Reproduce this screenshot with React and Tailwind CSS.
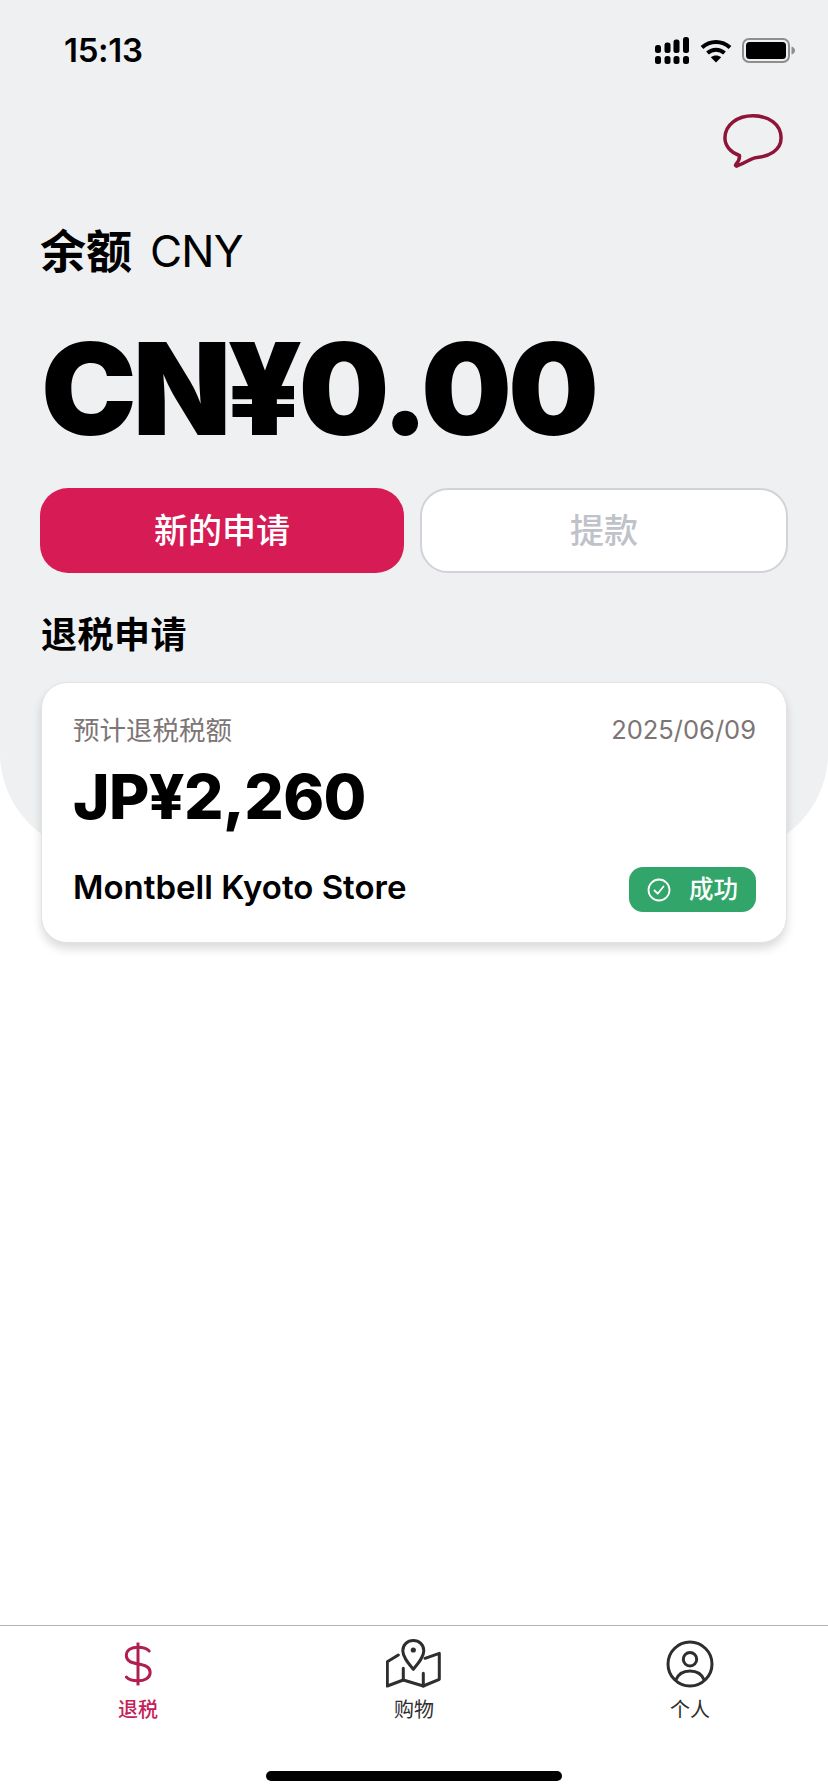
const CJK = '"Inter","Noto Sans CJK SC",sans-serif';

function StatusIcons() {
  return (
    <div className="flex items-center">
      <svg width="34" height="27" viewBox="0 0 34 27" fill="#000">
        <rect x="0" y="8" width="6" height="8" rx="2.5" />
        <rect x="9.500" y="5.500" width="6" height="10.500" rx="2.500" />
        <rect x="18.500" y="2.500" width="6" height="13.500" rx="2.500" />
        <rect x="28" y="0" width="6" height="16" rx="2.500" />
        <rect x="0" y="19" width="6" height="8" rx="2.500" />
        <rect x="9.500" y="19" width="6" height="8" rx="2.500" />
        <rect x="18.500" y="19" width="6" height="8" rx="2.500" />
        <rect x="28" y="19" width="6" height="8" rx="2.500" />
      </svg>
      <svg width="32" height="25" viewBox="0 0 32 25" fill="none" stroke="#000" strokeWidth="4" className="ml-[11px]">
        <path d="M2 9.500C10 2 22 2 30 9.500" />
        <path d="M7.500 15C12.500 10.500 19.500 10.500 24.500 15" />
        <path d="M16 24.500L10.800 19.200C13.800 16.800 18.200 16.800 21.200 19.200Z" fill="#000" stroke="none" />
      </svg>
      <svg width="53" height="25" viewBox="0 0 53 25" className="ml-[10px]">
        <rect x="1" y="1" width="46" height="23" rx="6" fill="none" stroke="#8e8e90" strokeWidth="2" />
        <rect x="4" y="4" width="40" height="17" rx="3.500" fill="#000" />
        <path d="M49.500 8.500C51.500 9 53 10.500 53 12.500C53 14.500 51.500 16 49.500 16.500Z" fill="#8e8e90" />
      </svg>
    </div>
  );
}

function ChatIcon() {
  return (
    <svg width="60" height="56" viewBox="0 0 62 56" fill="none" stroke="#8f1437" strokeWidth="3.600" strokeLinejoin="round">
      <path d="M31 2C47 2 60 10.500 60 25C60 38 47 44 35 45C30 45 25 50 14 54C13 54 12.500 53 13.500 52C16 49 17.500 46.500 17 43C8 40 2 33 2 25C2 11 15 2 31 2Z" />
    </svg>
  );
}

function NavItem({ label, color, children }) {
  return (
    <div className="flex w-[276px] flex-col items-center">
      <div className="flex h-[50px] items-center justify-center">{children}</div>
      <span className={`mt-[7px] text-[20px] leading-[28px] ${color}`}>{label}</span>
    </div>
  );
}

export default function App() {
  return (
    <div className="relative flex h-[1792px] w-[828px] flex-col overflow-hidden bg-white text-black" style={{ fontFamily: CJK }}>
      <div className="absolute left-0 top-0 h-[853px] w-[828px] rounded-b-[100px] bg-[#eff0f2]" />

      <div className="relative flex flex-col">
        <div className="flex h-[100px] items-center justify-between pl-[64px] pr-[33px]">
          <span className="text-[33px] font-semibold leading-none tracking-[-0.3px]">15:13</span>
          <StatusIcons />
        </div>

        <div className="flex justify-end pr-[45px] pt-[13px]">
          <ChatIcon />
        </div>

        <div className="ml-[40px] mt-[52px] flex items-center leading-[60px]">
          <span className="text-[46px] font-semibold">余额</span>
          <span className="ml-[18px] text-[44px] tracking-[-0.8px]">CNY</span>
        </div>

        <div className="ml-[41px] mt-[38px] text-[128px] font-black leading-[140px] tracking-[-4px]">CN¥0.00</div>

        <div className="mx-[40px] mt-[29px] flex gap-[16px]">
          <div className="flex h-[85px] flex-1 items-center justify-center rounded-[28px] bg-[#d61b55] text-[34px] font-medium text-white">新的申请</div>
          <div className="flex h-[85px] flex-1 items-center justify-center rounded-[28px] border-2 border-[#d1d3d9] bg-white text-[34px] font-medium text-[#c0c2c9]">提款</div>
        </div>

        <div className="ml-[41px] mt-[37px] text-[36px] font-semibold leading-[50px] tracking-[0.5px]">退税申请</div>

        <div className="mx-[41px] mt-[22px] flex h-[261px] flex-col rounded-[26px] border border-[#e6e1e1] bg-white pl-[31px] pr-[30px] shadow-[0_6px_10px_rgba(0,0,0,0.14)]">
          <div className="mt-[29px] flex items-center justify-between text-[#7d7575]">
            <span className="text-[26.500px] leading-[36px]">预计退税税额</span>
            <span className="text-[25.500px] leading-[36px]">2025/06/09</span>
          </div>
          <div className="mt-[11px] text-[62px] font-extrabold leading-[76px] tracking-[-0.600px]">JP¥2,260</div>
          <div className="mt-[28px] flex items-start justify-between">
            <span className="mt-[2px] text-[33px] font-semibold leading-[44px]">Montbell Kyoto Store</span>
            <div className="mt-[4px] flex h-[45px] w-[127px] items-center justify-center gap-[18px] rounded-[14px] bg-[#32a66a] text-[24.500px] font-medium text-white">
              <svg width="24" height="24" viewBox="0 0 24 24" fill="none" stroke="#fff" strokeWidth="1.800" strokeLinecap="round" strokeLinejoin="round">
                <circle cx="12" cy="12" r="10.500" />
                <path d="M7.500 12.500L10.700 15.700L16.500 8.500" />
              </svg>
              <span>成功</span>
            </div>
          </div>
        </div>
      </div>

      <div className="relative mt-auto flex h-[167px] flex-col border-t border-[#b4b4b4] bg-white">
        <div className="flex justify-between pt-[13px]">
          <NavItem label="退税" color="font-medium text-[#c4215a]">
            <svg width="28" height="48" viewBox="0 0 30 48" fill="none" stroke="#b01f52" strokeWidth="3.200" strokeLinecap="round">
              <path d="M15 1V47" strokeLinecap="butt" />
              <path d="M27 10C24 7 20 6 15 6C8 6 2.500 9 2.500 15C2.500 28 28 20 28 33C28 39 22 42 15 42C10 42 5 41 2.500 38" />
            </svg>
          </NavItem>
          <NavItem label="购物" color="text-[#2e2e2e]">
            <svg width="56" height="50" viewBox="0 0 56 50" fill="none" stroke="#2e2e2e" strokeWidth="3" strokeLinejoin="round" strokeLinecap="round">
              <path d="M12.300 16L1.300 22.700V47L17.300 41L37.300 47L53.300 40.300V14.300L39 19.300" />
              <path d="M17.300 29.300V41M37.300 34.300V47" />
              <path d="M27.300 30.300C22 24 16.800 18 16.800 11.700C16.800 5.700 21.500 1.500 27.300 1.500C33.100 1.500 37.800 5.700 37.800 11.700C37.800 18 32.600 24 27.300 30.300Z" fill="#fff" />
              <circle cx="27.300" cy="11" r="2.600" fill="#2e2e2e" stroke="none" />
            </svg>
          </NavItem>
          <NavItem label="个人" color="text-[#2e2e2e]">
            <svg width="50" height="50" viewBox="0 0 50 50" fill="none" stroke="#2e2e2e" strokeWidth="3">
              <circle cx="25" cy="25" r="22" />
              <circle cx="25" cy="20.300" r="6.700" />
              <path d="M10.500 41.500C13 35 19 32 25 32C31 32 37 35 39.500 41.500" />
            </svg>
          </NavItem>
        </div>
        <div className="absolute bottom-[11px] left-[266px] h-[10px] w-[296px] rounded-full bg-black" />
      </div>
    </div>
  );
}
